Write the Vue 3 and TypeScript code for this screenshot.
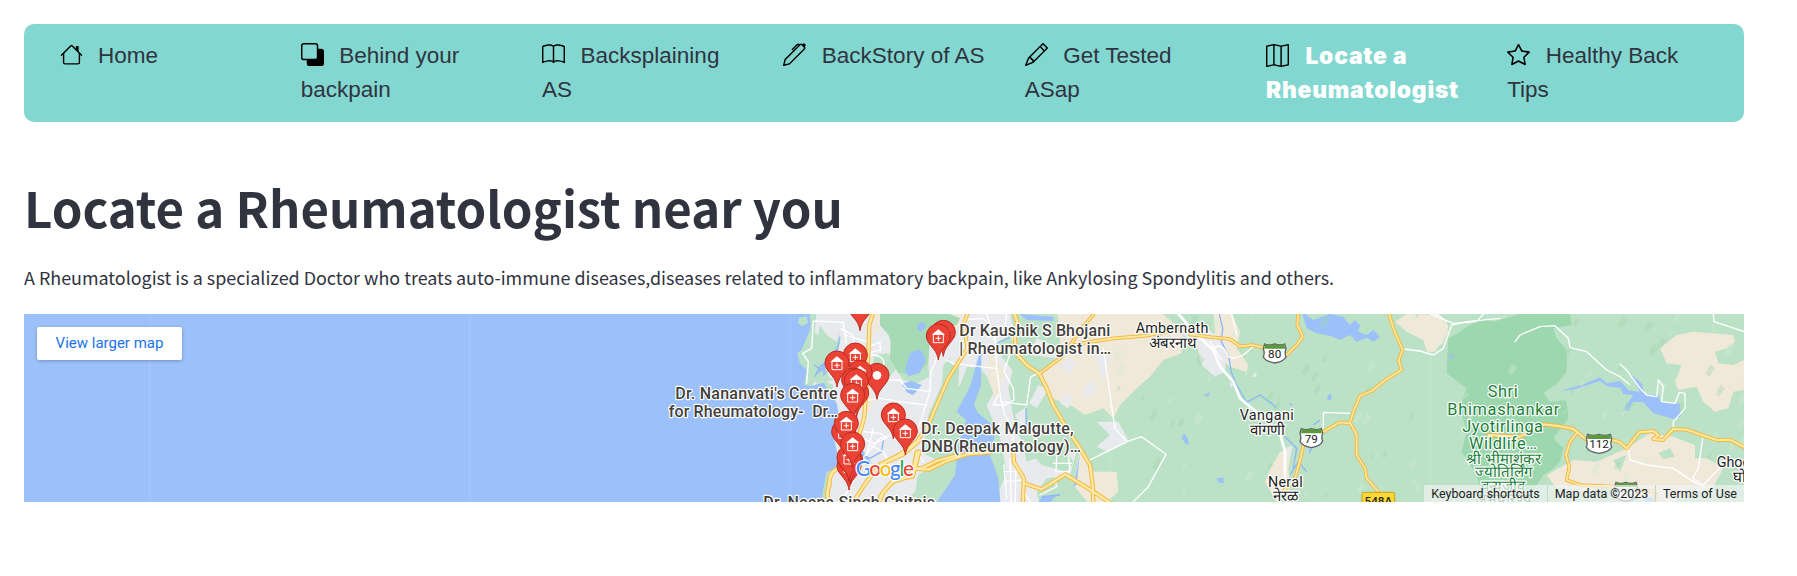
<script setup lang="ts">
interface NavItem { label: string; paths: string[]; active?: boolean }
interface Pin { x: number; y: number; dot?: boolean }
interface Road { d: string; dx: number; w?: number }

const nav: NavItem[] = [
  {
    label: 'Home',
    paths: [
      'M2 13.5V7h1v6.5a.5.5 0 0 0 .5.5h9a.5.5 0 0 0 .5-.5V7h1v6.5a1.5 1.5 0 0 1-1.5 1.5h-9A1.5 1.5 0 0 1 2 13.5zm11-11V6l-2-2V2.5a.5.5 0 0 1 .5-.5h1a.5.5 0 0 1 .5.5z',
      'M7.293 1.5a1 1 0 0 1 1.414 0l6.647 6.646a.5.5 0 0 1-.708.708L8 2.207 1.354 8.854a.5.5 0 1 1-.708-.708L7.293 1.5z',
    ],
  },
  {
    label: 'Behind your backpain',
    paths: ['M0 2a2 2 0 0 1 2-2h8a2 2 0 0 1 2 2v2h2a2 2 0 0 1 2 2v8a2 2 0 0 1-2 2H6a2 2 0 0 1-2-2v-2H2a2 2 0 0 1-2-2V2zm2-1a1 1 0 0 0-1 1v8a1 1 0 0 0 1 1h8a1 1 0 0 0 1-1V2a1 1 0 0 0-1-1H2z'],
  },
  {
    label: 'Backsplaining AS',
    paths: ['M1 2.828c.885-.37 2.154-.769 3.388-.893 1.33-.134 2.458.063 3.112.752v9.746c-.935-.53-2.12-.603-3.213-.493-1.18.12-2.37.461-3.287.811V2.828zm7.5-.141c.654-.689 1.782-.886 3.112-.752 1.234.124 2.503.523 3.388.893v9.923c-.918-.35-2.107-.692-3.287-.81-1.094-.111-2.278-.039-3.213.492V2.687zM8 1.783C7.015.936 5.587.81 4.287.94c-1.514.153-3.042.672-3.994 1.105A.5.5 0 0 0 0 2.5v11a.5.5 0 0 0 .707.455c.882-.4 2.303-.881 3.68-1.02 1.409-.142 2.59.087 3.223.877a.5.5 0 0 0 .78 0c.633-.79 1.814-1.019 3.222-.877 1.378.139 2.8.62 3.681 1.02A.5.5 0 0 0 16 13.5v-11a.5.5 0 0 0-.293-.455c-.952-.433-2.48-.952-3.994-1.105C10.413.809 8.985.936 8 1.783z'],
  },
  {
    label: 'BackStory of AS',
    paths: ['m13.498.795.149-.149a1.207 1.207 0 1 1 1.707 1.708l-.149.148a1.5 1.5 0 0 1-.059 2.059L4.854 14.854a.5.5 0 0 1-.233.131l-4 1a.5.5 0 0 1-.606-.606l1-4a.5.5 0 0 1 .131-.232l9.642-9.642a.5.5 0 0 0-.642.056L6.854 4.854a.5.5 0 1 1-.708-.708L9.44.854A1.5 1.5 0 0 1 11.5.796a1.5 1.5 0 0 1 1.998-.001zm-.644.766a.5.5 0 0 0-.707 0L1.95 11.756l-.764 3.057 3.057-.764L14.44 3.854a.5.5 0 0 0 0-.708l-1.585-1.585z'],
  },
  {
    label: 'Get Tested ASap',
    paths: ['M12.146.146a.5.5 0 0 1 .708 0l3 3a.5.5 0 0 1 0 .708l-10 10a.5.5 0 0 1-.168.11l-5 2a.5.5 0 0 1-.65-.65l2-5a.5.5 0 0 1 .11-.168l10-10zM11.207 2.5 13.5 4.793 14.793 3.5 12.5 1.207 11.207 2.5zm1.586 3L10.5 3.207 4 9.707V10h.5a.5.5 0 0 1 .5.5v.5h.5a.5.5 0 0 1 .5.5v.5h.293l6.5-6.5zm-9.761 5.175-.106.106-1.528 3.821 3.821-1.528.106-.106A.5.5 0 0 1 5 12.5V12h-.5a.5.5 0 0 1-.5-.5V11h-.5a.5.5 0 0 1-.468-.325z'],
  },
  {
    label: 'Locate a Rheumatologist',
    active: true,
    paths: ['M15.817.113A.5.5 0 0 1 16 .5v14a.5.5 0 0 1-.402.49l-5 1a.502.502 0 0 1-.196 0L5.5 15.01l-4.902.98A.5.5 0 0 1 0 15.5v-14a.5.5 0 0 1 .402-.49l5-1a.5.5 0 0 1 .196 0L10.5.99l4.902-.98a.5.5 0 0 1 .415.103zM10 1.91l-4-.8v12.98l4 .8V1.91zm1 12.98 4-.8V1.11l-4 .8v12.98zm-6-.8V1.11l-4 .8v12.98l4-.8z'],
  },
  {
    label: 'Healthy Back Tips',
    paths: ['M2.866 14.85c-.078.444.36.791.746.593l4.39-2.256 4.389 2.256c.386.198.824-.149.746-.592l-.83-4.73 3.522-3.356c.33-.314.16-.888-.282-.95l-4.898-.696L8.465.792a.513.513 0 0 0-.927 0L5.354 5.12l-4.898.696c-.441.062-.612.636-.283.95l3.523 3.356-.83 4.73zm4.905-2.767-3.686 1.894.694-3.957a.565.565 0 0 0-.163-.505L1.71 6.745l4.052-.576a.525.525 0 0 0 .393-.288L8 2.223l1.847 3.658a.525.525 0 0 0 .393.288l4.052.575-2.906 2.77a.565.565 0 0 0-.163.506l.694 3.957-3.686-1.894a.503.503 0 0 0-.461 0z'],
  },
]

// Map units are a third of a pixel; each section of the map has its own x origin.
const W = 0, C = 720, E = 1620, F = 2400

const highways: Road[] = [
  { dx: W, w: 13, d: 'M700 20L688 60L686 130L682 200L678 270L672 340L660 380L640 440' },
  { dx: W, w: 14, d: 'M590 492Q566 505 568 540Q552 580 580 600' },
  { dx: W, w: 13, d: 'M830 440L820 500Q800 520 760 530L730 560L715 600M640 590L680 530L720 480L790 448L840 405M820 490L845 490L890 468L960 448' },
  { dx: C, w: 12, d: 'M262 27L250 60L258 100L262 130L205 220L170 300L145 360L110 410L60 448L0 478' },
  { dx: C, w: 13, d: 'M0 575L40 525L98 515L118 440M100 490L145 494L200 468L260 448L330 442' },
  { dx: C, w: 13, d: 'M400 20L412 50L404 90L408 145L440 180L478 206L500 250L520 300L560 370L600 430L630 480L638 540L640 600' },
  { dx: C, w: 11, d: 'M640 30L600 75L578 110L540 160L478 206M540 130L620 112L700 100L800 92L900 72' },
  { dx: C, w: 13, d: 'M400 440L402 472L432 520L428 600M430 534L485 553L556 508L640 560L700 600' },
  { dx: E, w: 11, d: 'M30 88L90 96L150 102L180 124L215 120L252 128M318 152L350 120L368 95L352 60L355 20' },
  { dx: E, w: 11, d: 'M625 20L640 70L668 135L656 165L664 195L620 222L575 258L540 272L524 310L510 352L530 390L530 450L555 490L560 520L595 560' },
  { dx: E, w: 11, d: 'M508 355L480 352L430 380M370 420L362 460L345 520L310 560' },
  { dx: F, w: 12, d: 'M145 390L240 395L280 375L310 358L360 364L400 372L412 382L440 405M514 404L540 412L560 430L598 382L640 378L655 390L640 402L668 405L700 372L740 374L780 388L830 405L870 404L920 430' },
  { dx: F, w: 11, d: 'M412 382L390 410L378 450L388 485L380 525L420 540L520 545L590 555L645 560L650 600' },
]

const minorRoads: Road[] = [
  { dx: W, d: 'M520 48L610 52L618 110L622 200M520 48L515 130L488 145L505 170L500 235M615 90L680 110M600 70L640 90L642 200L640 300' },
  { dx: W, d: 'M685 125L720 112L722 135L690 142M690 150Q740 150 730 185L722 240M745 225L780 225L800 250L870 260L835 370L720 400L650 480M870 260L872 205L892 155' },
  { dx: W, d: 'M660 290L720 280L780 290L860 300M670 380L720 385L740 400L700 415L660 395M660 440L640 530L610 580M690 420L730 440L750 480M700 370L680 450M760 400L800 425L830 440L850 470' },
  { dx: C, d: 'M200 165L220 175L345 190M250 45L310 40L345 80L350 190L362 280L375 330L398 370L402 440M320 27L345 110M362 290L440 300L452 215L475 206M355 270L340 300L375 300' },
  { dx: C, d: 'M372 480L380 580M390 460L394 600M408 480L405 600M372 500L420 500M375 530L430 525M530 450L528 500L570 500L565 450M520 475L575 475M380 27L376 60L402 110L372 200L400 250L402 285L375 300' },
  { dx: C, d: 'M670 130L690 270L705 370L740 410L785 395L858 448L805 545L760 590M738 412L680 440L630 465M480 570L530 545L525 520L560 510M430 560L450 590M350 130L400 140' },
  { dx: E, w: 8, d: 'M-10 20L45 85L100 135L120 185L160 230L180 280L240 330L300 385L315 440L315 530' },
  { dx: E, d: 'M95 130Q130 110 145 155Q160 165 190 150L220 125M155 27L170 90M90 110L125 165M430 370L430 322L510 325M668 132L720 138L760 150L790 130L815 60L860 50L960 40M700 5L775 30L800 50' },
  { dx: F, d: 'M-30 27L40 55L110 50L130 27M225 110L240 90L300 65L345 62L385 100L390 128L440 140L500 195L540 215L568 238M540 178L560 195L600 250L620 270L650 275L655 225L670 245L665 290L705 295L718 262L735 265L735 310L700 350L700 370' },
  { dx: F, d: 'M820 27L822 50L920 82M565 430L570 465L620 480L700 490L760 530L820 560M788 400L775 490L758 520L790 540L840 488L912 470' },
]

const pins: Pin[] = [
  { x: 660, y: 5 }, { x: 910, y: 82 }, { x: 895, y: 93 },
  { x: 646, y: 150 }, { x: 591, y: 174 }, { x: 711, y: 211, dot: true },
  { x: 660, y: 202 }, { x: 641, y: 225 }, { x: 650, y: 264 }, { x: 649, y: 228 },
  { x: 638, y: 271 }, { x: 611, y: 380 }, { x: 619, y: 355 },
  { x: 760, y: 330 }, { x: 796, y: 378 },
  { x: 627, y: 483 }, { x: 632, y: 465 }, { x: 627, y: 457 }, { x: 638, y: 417 },
]

const shields = [
  { x: 1904, y: 145, n: '80', w: 68 },
  { x: 2014, y: 399, n: '79', w: 68 },
  { x: 2877, y: 416, n: '112', w: 76 },
  { x: 2958, y: 560, n: '', w: 68 },
]

// Faint relief facets scattered over the hills.
const facets: string[] = []
let seed = 17
const rnd = (): number => {
  seed = (seed * 16807) % 2147483647
  return seed / 2147483647
}
for (let i = 0; i < 120; i++) {
  const x = 1420 + rnd() * 1900
  const y = 30 + rnd() * 550
  const s = 10 + rnd() * 24
  facets.push(`M${x.toFixed(0)} ${y.toFixed(0)}l${(s * 0.5).toFixed(0)} ${(-s).toFixed(0)}l${(s * 0.5).toFixed(0)} ${(s * 0.4).toFixed(0)}l${(-s * 0.6).toFixed(0)} ${(s * 0.9).toFixed(0)}z`)
}
const lightFacets = facets.filter((_, i) => i % 2 === 0).join('')
const darkFacets = facets.filter((_, i) => i % 2 === 1).join('')
</script>

<template>
  <main class="page">
    <nav class="menu">
      <a v-for="item in nav" :key="item.label" class="menu-item" :class="{ active: item.active }">
        <svg class="icon" viewBox="0 0 16 16"><path v-for="p in item.paths" :key="p" :d="p" fill-rule="evenodd" /></svg>{{ item.label }}
      </a>
    </nav>

    <h1>Locate a Rheumatologist near you</h1>
    <p class="intro"><span>A Rheumatologist is a specialized Doctor who treats auto-immune diseases,diseases related to inflammatory backpain, like Ankylosing Spondylitis and others.</span></p>

    <section class="map">
      <svg class="canvas" viewBox="-1848 27 5160 564" preserveAspectRatio="none">
        <rect x="-1848" y="27" width="5160" height="564" fill="#9cc0f9" />

        <!-- land -->
        <path fill="#bbe2c6" d="M510 20L512 70L495 110L485 135L472 145L480 175L500 195L492 240L520 243L555 225L575 255L592 300L598 350L582 400L590 440L600 490L560 500L548 560L545 600H3320V20Z" />
        <path fill="#bbe2c6" d="M478 38L500 34L504 54L486 64L474 54Z" />
        <path fill="#e8eaed" d="M530 20L524 80L560 120L600 110L580 150L555 165L530 190L520 240L560 230L592 300L598 350L582 400L592 440L600 490L568 500L556 591L840 591L830 520L900 470L840 440L880 370L960 240L1000 140L980 27Z" />
        <path fill="#bbe2c6" d="M540 60L560 90L590 110L600 60L590 140L570 180L560 225L515 190L500 160L530 120ZM545 225L580 240L575 270ZM700 150L745 145L770 190L740 225L700 190Z" />
        <path fill="#a6dab4" d="M725 20L738 60L752 110L750 160L775 205L830 210L865 175L870 100L905 40L935 20Z" />
        <path fill="#bbe2c6" d="M775 205L830 210L865 175L868 215L830 235L790 225ZM910 180L960 130L955 250L900 370L850 420L865 330L905 240ZM960 450L880 480L835 510L825 560L790 591H985L1060 500L1090 440Z" />
        <path fill="#f0e9d9" d="M700 25L720 25L715 80L695 90ZM935 27L1010 27L1015 75L970 110L930 70ZM690 260L705 290L670 340Z" />
        <path fill="#bbe2c6" d="M505 205L540 195L580 225L530 236Z" />

        <!-- creek and central towns -->
        <g transform="translate(720 0)">
          <path fill="#bbe2c6" d="M260 140L340 150L320 230L350 290L330 330L345 400L420 450L470 600H850V20H650L560 110L440 60L420 20L370 20L340 80L290 110Z" />
          <path fill="#e8eaed" d="M250 20L390 20L400 70L345 130L400 200L460 170L500 260L470 310L440 290L430 420L440 470L520 440L590 440L570 510L500 520L470 560L480 600H340L380 500L360 400L320 300L350 250L300 190L215 180L205 140Z" />
          <path fill="#bbe2c6" d="M410 150L480 150L520 260L475 240L445 300L405 330L440 400L550 420L580 470L560 500L485 480L450 440L408 380L385 250Z" />
          <path fill="#f0e9d9" d="M530 20L840 20L910 80L905 145L850 165L810 215L770 250L720 300L700 340L670 310L615 330L580 305L515 280L485 200L540 150L540 70ZM325 135L375 200L350 290L325 225ZM600 430L640 500L710 500L715 560L670 600H630L580 540Z" />
          <path fill="#e8eaed" d="M560 160L590 175L570 205L545 190ZM620 235L650 230L640 270L608 276ZM470 100L540 130L530 160L450 150ZM650 350L715 350L745 405L685 440L650 425L690 390ZM630 145L690 160L670 230L650 165ZM555 265L580 275L565 310L540 295Z" />
          <path fill="#a6dab4" d="M0 20H190L240 40L230 60L120 90L60 130L0 60Z" />
          <path fill="#9cc0f9" d="M298 145L270 245L230 320L258 345L235 420L225 510L165 600H362L355 520L330 450L350 370L295 325L282 300L303 240L304 145ZM120 50L140 60L125 82L110 72ZM90 145L115 135L135 165L120 200L85 215L75 195ZM65 240L90 230L120 245L95 270ZM420 27L440 45L520 48L520 35L450 30ZM540 570L580 545L600 445L590 540L520 580L510 600L470 600L485 575Z" />
          <path class="river" d="M304 150L360 110L430 80M440 375L438 310M485 575L540 570" />
          <path fill="#9cc0f9" d="M912 385L925 405L918 418L905 400Z" />
        </g>

        <!-- central valleys -->
        <g transform="translate(1620 0)">
          <path fill="#f0e9d9" d="M100 20L155 27L180 80L170 130L205 180L200 200L150 185L110 150ZM645 50L680 27L770 30L805 60L800 90L765 140L740 140L730 105L680 80ZM300 440L335 430L325 490L330 550L290 591L255 530L272 490Z" />
          <path fill="#e8eaed" d="M20 60L90 75L140 120L135 200L105 215L65 180L50 120L0 80ZM215 215L228 200L230 215ZM310 430L338 422L330 455L315 460ZM150 230L165 240L150 248Z" />
          <path class="river" d="M118 27L128 70L124 110L145 150L155 205L170 240L200 292L240 270L275 295L290 310M295 375L350 430L340 490M330 510L355 470L380 500M400 360L420 345" />
          <path fill="#9cc0f9" d="M365 20L400 45L450 27L490 35L510 60L525 45L540 60L535 80L560 90L580 75L600 95L580 110L560 98L530 110L510 90L480 105L450 92L410 85L380 70ZM70 270L90 262L85 275ZM443 270L456 268L452 286L442 285ZM110 520L130 518L132 534L114 532ZM385 432L398 428L390 448ZM10 385L20 395L28 420L18 416ZM328 295L340 298L330 303ZM805 155L825 145L818 160Z" />
        </g>

        <!-- wildlife sanctuary and plateau -->
        <g transform="translate(2400 0)">
          <path fill="#9cd7ae" d="M60 80L120 40L160 50L240 27H390L395 60L340 70L350 100L380 135L380 200L340 250L380 290L385 340L340 400L370 430L360 470L310 520L280 560L200 545L130 591L110 510L65 440L80 380L60 310L80 250L20 205L25 100Z" />
          <path fill="#bbe2c6" d="M310 265L345 240L380 285L330 290ZM310 510L360 480L330 560L250 600Z" />
          <path fill="#f0e9d9" d="M660 130L710 90L760 80L880 90L885 110L860 130L825 140L835 175L880 180L912 165V255L880 260L865 310L825 320L790 290L770 245L715 255L705 230L725 180L680 175ZM320 510L400 465L470 470L560 430L630 385L700 395L765 420L765 460L800 460L850 490L820 545L700 591H620L500 545L430 560L350 550ZM-30 40L25 80L5 120L-40 110Z" />
          <path fill="#bbe2c6" d="M655 445L690 430L705 455L670 462ZM520 465L560 450L540 500Z" />
          <path fill="#9cc0f9" d="M362 257L430 238L480 217L500 235L540 228L565 255L600 262L570 205L605 235L615 268L655 270L660 290L720 296L722 335L700 342L640 325L610 292L580 290L565 318L545 318L580 270L550 268L540 248L500 244L480 228L400 254ZM22 155L44 145L36 157L40 166ZM610 580L640 575L640 600H615Z" />
        </g>
        <path :d="lightFacets" fill="#d3ead0" opacity=".4" />
        <path :d="darkFacets" fill="#a3d6b0" opacity=".38" />

        <!-- lakes and inlets in the west -->
        <path fill="#9cc0f9" d="M820 140L840 132L858 165L838 205L810 210L800 190ZM790 235L815 228L845 240L820 270L800 262ZM575 145L595 120L585 165L555 190L530 210L548 180ZM545 170L560 205L550 215ZM645 440L670 438L700 480L675 460Z" />
        <path class="river" d="M600 95L590 150L540 185L525 215M645 440L690 460L725 440L730 405M522 180L545 195" />

        <!-- roads -->
        <g fill="none" stroke-linejoin="round" stroke-linecap="round">
          <path v-for="r in minorRoads" :key="r.d" :d="r.d" :transform="`translate(${r.dx} 0)`" stroke="#fff" :stroke-width="r.w ?? 4" />
          <path v-for="r in highways" :key="r.d" :d="r.d" :transform="`translate(${r.dx} 0)`" stroke="#f5b83d" :stroke-width="r.w" />
          <path v-for="r in highways" :key="'i' + r.d" :d="r.d" :transform="`translate(${r.dx} 0)`" stroke="#feeaa5" :stroke-width="(r.w ?? 10) - 6" />
        </g>

        <path d="M-1470 27V591M-510 27V591M451 27V591M1411 27V591M2371 27V591" stroke="#fff" stroke-width="2" opacity=".22" />

        <g v-for="s in shields" :key="s.x" :transform="`translate(${s.x} ${s.y})`">
          <path :d="`M${-s.w / 2 + 4} -28Q${-s.w / 4} -22 0 -28Q${s.w / 4} -22 ${s.w / 2 - 4} -28L${s.w / 2} -14Q${s.w / 2 - 5} 0 ${s.w / 2} 10Q${s.w / 2 - 6} 24 0 29Q${-s.w / 2 + 6} 24 ${-s.w / 2} 10Q${-s.w / 2 + 5} 0 ${-s.w / 2} -14Z`" fill="#fff" stroke="#5f6368" stroke-width="4" />
          <path :d="`M${-s.w / 2 + 5} -27Q${-s.w / 4} -22 0 -27Q${s.w / 4} -22 ${s.w / 2 - 5} -27L${s.w / 2 - 3} -14H${-s.w / 2 + 3}Z`" fill="#5a9a3c" />
          <text y="14" text-anchor="middle" class="shield">{{ s.n }}</text>
        </g>
        <rect x="2166" y="562" width="98" height="50" rx="6" fill="#fdd835" stroke="#c9a21b" stroke-width="3" />
        <text x="2215" y="600" text-anchor="middle" class="shield road-no">548A</text>

        <!-- place names -->
        <g class="place">
          <text x="1487" y="85" textLength="218">Ambernath</text>
          <text x="1598" y="129" text-anchor="middle" class="deva">अंबरनाथ</text>
          <text x="1799" y="346" textLength="162">Vangani</text>
          <text x="1881" y="390" text-anchor="middle" class="deva">वांगणी</text>
          <text x="1884" y="545" textLength="104">Neral</text>
          <text x="1937" y="589" text-anchor="middle" class="deva">नेरळ</text>
          <text x="3230" y="485">Ghod</text>
          <text x="3279" y="530" class="deva">घोडे</text>
        </g>
        <g class="park" text-anchor="middle">
          <text x="2588" y="276" textLength="90">Shri</text>
          <text x="2590" y="329" textLength="336">Bhimashankar</text>
          <text x="2588" y="382" textLength="242">Jyotirlinga</text>
          <text x="2589" y="433" textLength="204">Wildlife…</text>
          <text x="2591" y="476" class="deva">श्री भीमाशंकर</text>
          <text x="2590" y="517" class="deva">ज्योतिर्लिंग</text>
          <text x="2590" y="557" class="deva">वन्यजीव</text>
          <text x="2590" y="597" class="deva">अभयारण्य</text>
        </g>

        <!-- markers -->
        <g v-for="(p, i) in pins" :key="i" :transform="`translate(${p.x} ${p.y})`">
          <path d="M0 72C-3 50 -12 42 -23 28C-31 18 -36 10 -36 0A36 36 0 0 1 36 0C36 10 31 18 23 28C12 42 3 50 0 72Z" fill="#ea4335" stroke="#b92a20" stroke-width="3" />
          <circle v-if="p.dot" r="13" fill="#fff" />
          <g v-else>
            <path d="M-20 -4L0 -20L20 -4Z" fill="#fff" />
            <path d="M-15 -5H15V20H-15ZM0 -1V15M-8 7H8" fill="none" stroke="#fff" stroke-width="3" />
          </g>
        </g>

        <g class="clinic">
          <text x="106" y="281" textLength="487">Dr. Nananvati's Centre</text>
          <text x="86" y="336" textLength="405">for Rheumatology-</text>
          <text x="517" y="336" textLength="77">Dr…</text>
          <text x="958" y="94" textLength="453">Dr Kaushik S Bhojani</text>
          <text x="958" y="148" textLength="455">| Rheumatologist in…</text>
          <text x="843" y="387" textLength="458">Dr. Deepak Malgutte,</text>
          <text x="843" y="441" textLength="480">DNB(Rheumatology)…</text>
          <text x="370" y="610" textLength="515">Dr. Neena Singh Chitnis</text>
        </g>
        <text x="647" y="512" class="google" textLength="175"><tspan fill="#4285f4">G</tspan><tspan fill="#ea4335">o</tspan><tspan fill="#fbbc04">o</tspan><tspan fill="#4285f4">g</tspan><tspan fill="#34a853">l</tspan><tspan fill="#ea4335">e</tspan></text>
      </svg>
      <a class="larger">View larger map</a>
      <footer class="credits">
        <span class="keys">Keyboard shortcuts</span><span class="data">Map data ©2023</span><span class="terms">Terms of Use</span>
      </footer>
    </section>
  </main>
</template>

<style>
body { background: #fff; }
</style>

<style scoped>
.page { box-sizing: border-box; width: 1797px; height: 576px; padding: 24px 53px 0 24px; overflow: hidden; color: #31333f; }
.menu { display: grid; grid-template-columns: repeat(7, minmax(0, 1fr)); box-sizing: border-box; height: 98px; padding: 15px 15.5px 0; background: #82d8d0; border-radius: 10px; }
.menu-item { box-sizing: border-box; padding: 0 20px; font: 22.5px/34px "Liberation Sans", Arial, sans-serif; color: #31333f; }
.menu-item.active { padding-right: 10px; color: #fff; font: 900 22.8px/34px Inter, "Liberation Sans", sans-serif; letter-spacing: .8px; }
.icon { width: 23px; height: 23px; margin-right: 15.5px; vertical-align: -3px; fill: #000; }
.active .icon { margin-right: 16.5px; }
h1 { margin: 49px 0 0; font: 700 49.15px/72px "Noto Sans CJK SC", "Noto Sans", sans-serif; white-space: nowrap; }
.intro { margin: 15px 0 0; height: 54px; font: 400 17.91px/38px "Noto Sans CJK SC", "Noto Sans", sans-serif; white-space: nowrap; }
.map { position: relative; height: 188px; margin-top: 2px; overflow: hidden; }
.canvas { display: block; width: 1720px; height: 188px; }
.larger { position: absolute; left: 13px; top: 13px; box-sizing: border-box; width: 145px; height: 33px; border-radius: 2px; background: #fff; box-shadow: 0 1px 4px -1px rgba(0, 0, 0, .4); color: #1a73e8; font: 15px/33px Roboto, sans-serif; text-align: center; white-space: nowrap; }
.credits { position: absolute; right: 0; bottom: 0; display: flex; box-sizing: border-box; width: 320px; height: 17px; background: rgba(240, 243, 242, .72); font: 12.5px/17px Roboto, sans-serif; color: #222; white-space: nowrap; }
.credits span { box-sizing: border-box; text-align: center; }
.keys { width: 123px; }
.data { width: 108px; border-left: 1px solid rgba(190, 205, 198, .8); }
.terms { width: 89px; border-left: 1px solid rgba(190, 205, 198, .8); }
.river { fill: none; stroke: #8cb8f5; stroke-width: 4; stroke-linejoin: round; }
.shield { font: 35px Roboto, sans-serif; fill: #222; }
.road-no { font-weight: 500; }
.place text, .park text, .clinic text, .google { paint-order: stroke; stroke: #fff; stroke-width: 7px; stroke-linejoin: round; }
.place text { font: 43px Roboto, sans-serif; fill: #222; }
.park text { font: 49px Roboto, sans-serif; fill: #188038; }
.place .deva, .park .deva { font-size: 45px; }
.clinic text { font: 500 48px Roboto, sans-serif; fill: #443f3d; }
.google { font: 500 62px Lato, sans-serif; }
</style>
